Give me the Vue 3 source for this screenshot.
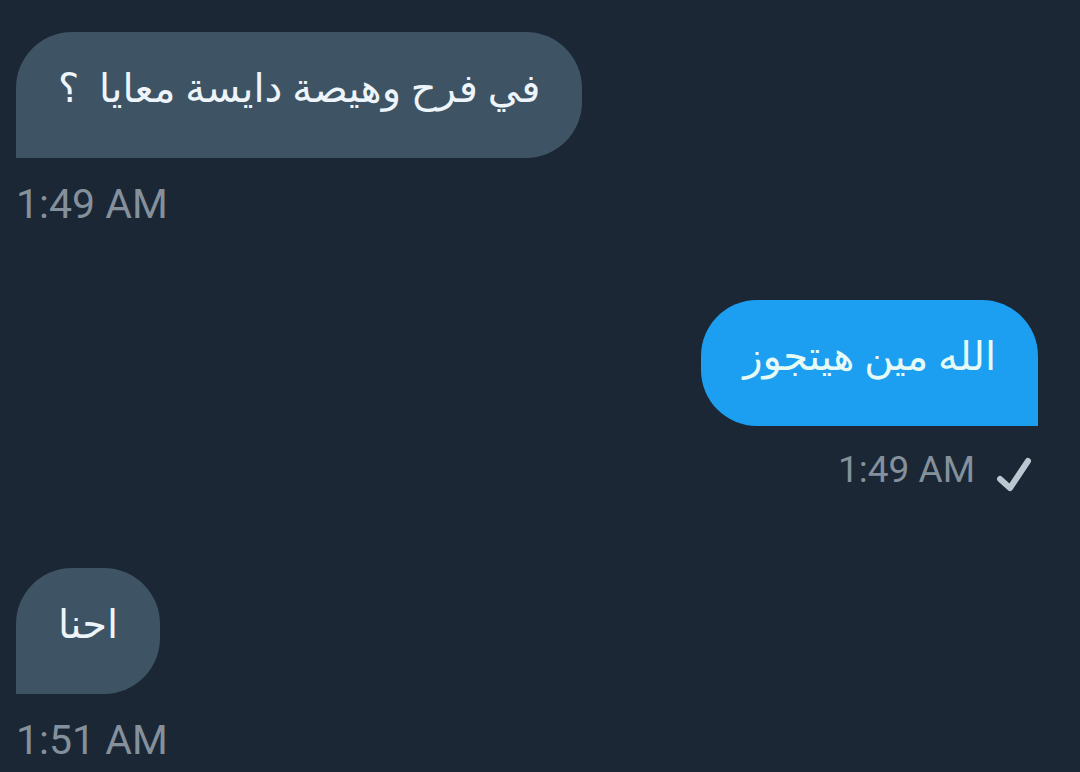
<script setup>
import { ref } from 'vue';

// Messages of the open conversation, oldest first
const messages = ref([
    { id: 1, text: 'في فرح وهيصة دايسة معايا  ؟', time: '1:49 AM', mine: false },
    { id: 2, text: 'الله مين هيتجوز', time: '1:49 AM', mine: true },
    { id: 3, text: 'احنا', time: '1:51 AM', mine: false }
]);
</script>

<template>
    <main class="chat">
        <article
            v-for="message in messages"
            :key="message.id"
            class="message"
            :class="{ mine: message.mine }"
        >
            <p class="bubble" dir="rtl" lang="ar">{{ message.text }}</p>
            <div class="meta">
                <time>{{ message.time }}</time>
                <!-- Sent mark, own messages only -->
                <svg v-if="message.mine" class="check" viewBox="0 0 36 36" role="img" aria-label="Sent">
                    <path d="M4 23 L14 32 L32 5" />
                </svg>
            </div>
        </article>
    </main>
</template>

<style>
body {
    margin: 0;
    background: #1b2734;
}
</style>

<style scoped>
.chat {
    display: flex;
    flex-direction: column;
    gap: 72px;
    padding: 32px 42px 0 16px;
    font-family: Roboto, "DejaVu Sans", sans-serif;
}

.message {
    display: flex;
    flex-direction: column;
    align-items: flex-start;
}

.message.mine {
    align-items: flex-end;
}

.bubble {
    margin: 0;
    padding: 31px 42px 43px;
    border-radius: 56px 56px 56px 0;
    background: #3e5465;
    color: #eef5fa;
    font-size: 40px;
    line-height: 52px;
    white-space: pre-wrap;
}

.mine .bubble {
    border-radius: 56px 56px 0 56px;
    background: #1d9ff1;
    color: #e6fbf6;
}

.meta {
    display: flex;
    align-items: flex-start;
    padding-top: 22px;
    color: #84909c;
    font-size: 41px;
    line-height: 48px;
}

.mine .meta {
    gap: 21px;
    padding: 20px 6px 2px 0;
    font-size: 37px;
}

.check {
    width: 36px;
    height: 36px;
    padding-top: 10px;
    fill: none;
    stroke: #bcc7d2;
    stroke-width: 6;
    stroke-linecap: round;
    stroke-linejoin: round;
}
</style>
